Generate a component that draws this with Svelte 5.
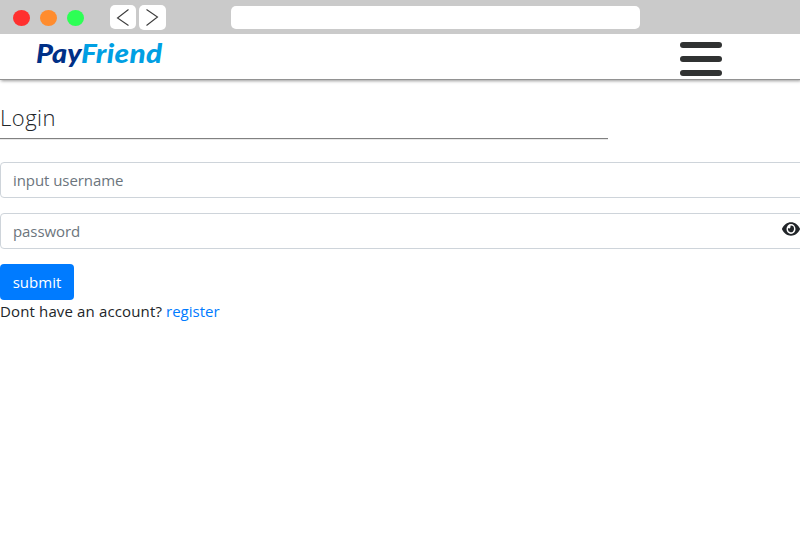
<script>
  const lights = ['#ff302f', '#ff8c2e', '#2dff55'];
</script>

<div class="window">
  <div class="chrome">
    <div class="lights">
      {#each lights as color}
        <span class="light" style="background: {color}"></span>
      {/each}
    </div>
    <div class="navs">
      <span class="nav back">
        <svg width="26" height="24" viewBox="0 0 26 24"><path d="M18.5 4.5 7.5 13l11 7.5" /></svg>
      </span>
      <span class="nav forward">
        <svg width="27" height="25" viewBox="0 0 27 25"><path d="M7.5 4.5 18.5 12l-11 8.5" /></svg>
      </span>
    </div>
    <div class="address"></div>
  </div>

  <header>
    <div class="logo"><span class="pay">Pay</span><span class="friend">Friend</span></div>
    <div class="burger"><span></span><span></span><span></span></div>
  </header>

  <main>
    <h1>Login</h1>
    <div class="field"><span class="username">input username</span></div>
    <div class="field second">
      <span class="password">password</span>
      <svg class="eye" width="18" height="18" viewBox="0 0 576 512" preserveAspectRatio="none"><path d="M572.52 241.4C518.29 135.59 410.93 64 288 64S57.68 135.64 3.48 241.41a32.35 32.35 0 0 0 0 29.19C57.71 376.41 165.07 448 288 448s230.32-71.64 284.52-177.41a32.35 32.35 0 0 0 0-29.19zM288 400a144 144 0 1 1 144-144 143.93 143.93 0 0 1-144 144zm0-240a95.31 95.31 0 0 0-25.31 3.79 47.85 47.85 0 0 1-66.9 66.9A95.78 95.78 0 1 0 288 160z" /></svg>
    </div>
    <button>submit</button>
    <p><span class="ask">Dont have an account?</span><a href="#register">register</a></p>
  </main>
</div>

<style>
  .window {
    width: 800px;
    height: 550px;
    overflow: hidden;
    background: #fff;
    color: #212529;
    font-family: "Open Sans", "Noto Sans", sans-serif;
    font-size: 15px;
  }
  .window * { box-sizing: border-box; }
  .chrome {
    position: relative;
    display: flex;
    height: 34px;
    background: #cacaca;
  }
  .lights {
    display: flex;
    gap: 10px;
    padding: 10px 0 0 13px;
    width: 110px;
  }
  .light {
    width: 17px;
    height: 16px;
    border-radius: 50%;
  }
  .navs {
    display: flex;
    gap: 3px;
    padding-top: 5px;
    width: 121px;
  }
  .nav {
    width: 26px;
    height: 24px;
    border-radius: 5px;
    background: #fff;
  }
  .forward { width: 27px; height: 25px; }
  .nav svg { display: block; }
  .nav path { fill: none; stroke: #3c3c3c; stroke-width: 1.1; }
  .address {
    width: 409px;
    height: 23px;
    margin-top: 6px;
    border-radius: 5px;
    background: #fff;
  }
  header {
    display: flex;
    justify-content: space-between;
    height: 46px;
    padding: 0 78px 0 36px;
    border-bottom: 1px solid #929292;
    box-shadow: 1px 1px 3px rgba(0, 0, 0, 0.4);
  }
  .logo {
    display: flex;
    padding-top: 3px;
    font: italic 900 26px/32px Lato, sans-serif;
    white-space: nowrap;
  }
  .logo span { transform-origin: 0 50%; }
  .pay { width: 45px; color: #003087; transform: scaleX(1.11); }
  .friend { color: #009fe3; letter-spacing: 0.3px; transform: scaleX(1.14); }
  .burger {
    display: flex;
    flex-direction: column;
    gap: 8px;
    width: 42px;
    padding-top: 8px;
  }
  .burger span {
    height: 6px;
    flex: none;
    border-radius: 3px;
    background: #303232;
  }
  h1 {
    width: 608px;
    height: 59px;
    margin: 0 0 23px;
    padding-top: 21px;
    border-bottom: 1px solid #818181;
    box-shadow: 0 1px 0 #e9e9e9;
    font-size: 22px;
    font-weight: 300;
    line-height: 32px;
    letter-spacing: 0.5px;
  }
  .field {
    display: flex;
    align-items: center;
    justify-content: space-between;
    width: 810px;
    height: 36px;
    padding: 0 10px 0 12px;
    border: 1px solid #ced4da;
    border-radius: 4px;
    color: #6c757d;
  }
  .username, .password { letter-spacing: -0.07px; }
  .second { margin-top: 15px; padding-right: 9px; }
  .eye { margin-top: -4px; fill: #212529; flex: none; }
  button {
    display: block;
    width: 74px;
    height: 36px;
    margin-top: 15px;
    padding: 0;
    border: 0;
    border-radius: 4px;
    background: #007bff;
    color: #fff;
    font: inherit;
  }
  p {
    display: flex;
    gap: 4px;
    margin: 0;
    line-height: 23px;
    white-space: nowrap;
  }
  .ask { letter-spacing: 0.14px; }
  a { color: #007bff; text-decoration: none; }
</style>
